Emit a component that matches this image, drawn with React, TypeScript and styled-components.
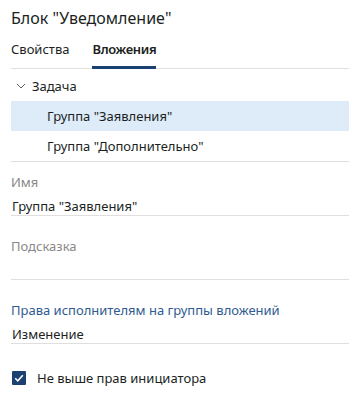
import { FC } from "react";
import styled, { createGlobalStyle } from "styled-components";

const GlobalStyle = createGlobalStyle`
  body {
    margin: 0;
    background: #ffffff;
    font-family: "Segoe UI", "Noto Sans", "Open Sans", sans-serif;
    color: #201f1e;
  }
`;

const App: FC = () => {
  return (
    <>
      <GlobalStyle />
      <StyledPanel>
        <StyledTitle>Блок "Уведомление"</StyledTitle>
        <StyledTabs>
          <StyledTab>Свойства</StyledTab>
          <StyledTab $active>Вложения</StyledTab>
        </StyledTabs>

        <StyledTree>
          <StyledTreeRow $level={0}>
            <svg width="10" height="10" viewBox="0 0 10 10">
              <path d="M1 3 L5 7 L9 3" fill="none" stroke="#605e5c" strokeWidth="1" />
            </svg>
            Задача
          </StyledTreeRow>
          <StyledTreeRow $level={1} $selected>
            Группа "Заявления"
          </StyledTreeRow>
          <StyledTreeRow $level={1}>Группа "Дополнительно"</StyledTreeRow>
        </StyledTree>

        <StyledField>
          <StyledLabel>Имя</StyledLabel>
          <StyledValue>Группа "Заявления"</StyledValue>
        </StyledField>

        <StyledField $gap>
          <StyledLabel>Подсказка</StyledLabel>
          <StyledValue />
        </StyledField>

        <StyledField $gap>
          <StyledLabel $accent>Права исполнителям на группы вложений</StyledLabel>
          <StyledValue>Изменение</StyledValue>
        </StyledField>

        <StyledCheckRow>
          <StyledCheckbox>
            <svg width="10" height="10" viewBox="0 0 10 10">
              <path d="M1.2 5.2 L3.8 7.8 L8.8 2.2" fill="none" stroke="#ffffff" strokeWidth="1.6" />
            </svg>
          </StyledCheckbox>
          Не выше прав инициатора
        </StyledCheckRow>
      </StyledPanel>
    </>
  );
};

const StyledPanel = styled.div`
  width: 338px;
  padding: 0 9px 0 11px;
  display: flex;
  flex-direction: column;
`;

const StyledTitle = styled.div`
  font-size: 16px;
  line-height: 22px;
  padding-top: 7px;
`;

const StyledTabs = styled.div`
  display: flex;
  gap: 23px;
  margin-top: 11px;
  border-bottom: 1px solid #e1dfdd;
`;

const StyledTab = styled.div<{ $active?: boolean }>`
  font-size: 13px;
  line-height: 18px;
  padding-bottom: 8px;
  font-weight: ${(p) => (p.$active ? 600 : 400)};
  letter-spacing: ${(p) => (p.$active ? "-0.35px" : "0")};
  border-bottom: 3px solid ${(p) => (p.$active ? "#1b4170" : "transparent")};
  margin-bottom: -1px;
`;

const StyledTree = styled.div`
  display: flex;
  flex-direction: column;
  padding: 2px 0 0;
  border-bottom: 1px solid #e1dfdd;
`;

const StyledTreeRow = styled.div<{ $level: number; $selected?: boolean }>`
  display: flex;
  align-items: center;
  gap: 6px;
  height: 30px;
  font-size: 13px;
  padding-left: ${(p) => (p.$level === 0 ? 5 : 36)}px;
  background: ${(p) => (p.$selected ? "#deecf9" : "transparent")};
`;

const StyledField = styled.div<{ $gap?: boolean }>`
  display: flex;
  flex-direction: column;
  margin-top: ${(p) => (p.$gap ? 21 : 11)}px;
`;

const StyledLabel = styled.div<{ $accent?: boolean }>`
  font-size: 13px;
  line-height: 18px;
  color: ${(p) => (p.$accent ? "#2f5b91" : "#8a8886")};
  padding-bottom: 7px;
`;

const StyledValue = styled.div`
  font-size: 13px;
  line-height: 16px;
  min-height: 16px;
  padding: 0 0 1px 1px;
  border-bottom: 1px solid #e1dfdd;
  &:not(:empty) {
    min-height: 0;
  }
`;

const StyledCheckRow = styled.div`
  display: flex;
  align-items: center;
  gap: 11px;
  margin-top: 25px;
  font-size: 13px;
  padding-left: 1px;
`;

const StyledCheckbox = styled.span`
  width: 14px;
  height: 14px;
  background: #1b4170;
  border-radius: 1px;
  display: flex;
  align-items: center;
  justify-content: center;
`;

export default App;
